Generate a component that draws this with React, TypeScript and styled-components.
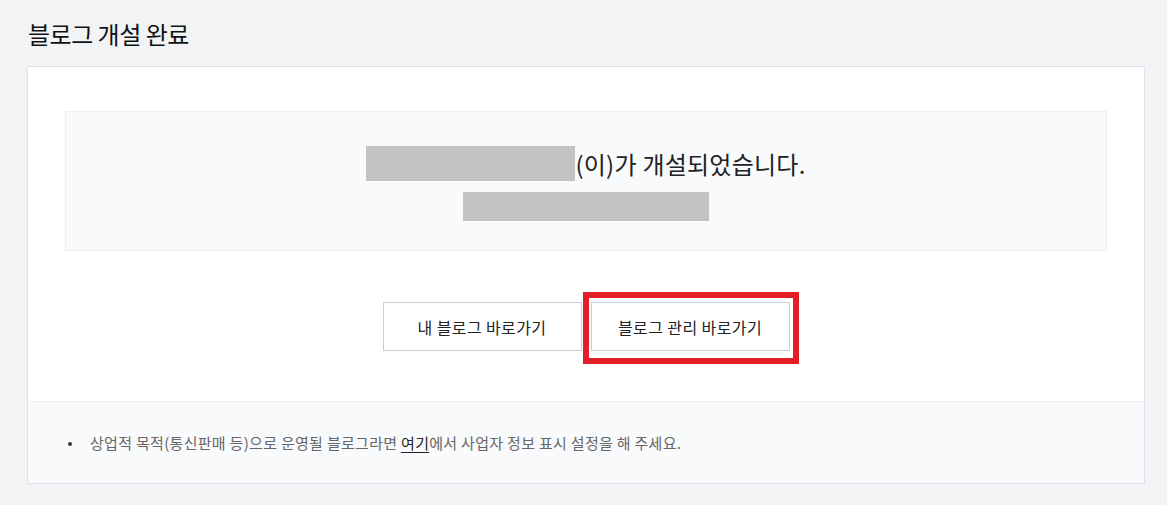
import styled, { createGlobalStyle } from 'styled-components';

const GlobalStyle = createGlobalStyle`
  html, body {
    margin: 0;
    padding: 0;
    background: #f2f3f5;
    font-family: "Noto Sans CJK KR", "Noto Sans", sans-serif;
  }
`;

const Page = styled.div`
  padding: 14px 0 0 27px;
`;

const Title = styled.h2`
  margin: 0 0 12px 1px;
  font-size: 24px;
  font-weight: 400;
  line-height: 40px;
  color: #111;
  letter-spacing: -0.5px;
`;

const Card = styled.div`
  width: 1116px;
  background: #fff;
  border: 1px solid #dde2ea;
`;

const Body = styled.div`
  padding: 44px 37px 50px;
`;

const ResultBox = styled.div`
  display: flex;
  flex-direction: column;
  align-items: center;
  padding: 34px 0 29px;
  background: #f9fafc;
  border: 1px solid #eceef2;
`;

const Message = styled.p`
  display: flex;
  align-items: center;
  margin: 0;
  height: 35px;
  font-size: 24px;
  color: #222;
  letter-spacing: 0.25px;
`;

const Masked = styled.span<{ $w: number; $h: number }>`
  display: inline-block;
  width: ${(p) => p.$w}px;
  height: ${(p) => p.$h}px;
  background: #c3c3c3;
`;

const Url = styled(Masked)`
  margin-top: 11px;
`;

const Buttons = styled.div`
  display: flex;
  justify-content: center;
  gap: 9px;
  margin-top: 51px;
`;

const Button = styled.a<{ $marked?: boolean }>`
  position: relative;
  display: flex;
  align-items: center;
  justify-content: center;
  width: 197px;
  height: 47px;
  border: 1px solid #c8cdd7;
  background: #fff;
  font-size: 16px;
  color: #222;
  text-decoration: none;
  letter-spacing: 0.4px;

  ${(p) =>
    p.$marked &&
    `
    &::after {
      content: '';
      position: absolute;
      left: -9px;
      right: -10px;
      top: -11px;
      bottom: -14px;
      border: 6px solid #e41e26;
    }
  `}
`;

const Notice = styled.ul`
  margin: 0;
  padding: 0 0 0 40px;
  height: 81px;
  display: flex;
  align-items: center;
  list-style: none;
  background: #f9fafc;
  border-top: 1px solid #eceef1;
`;

const NoticeItem = styled.li`
  position: relative;
  padding-left: 22px;
  font-size: 15px;
  color: #666;
  letter-spacing: 0.3px;

  &::before {
    content: '';
    position: absolute;
    left: 0;
    top: 50%;
    width: 4px;
    height: 4px;
    margin-top: -1px;
    border-radius: 50%;
    background: #333;
  }
`;

const Link = styled.a`
  color: #222;
  text-decoration: underline;
  text-underline-offset: 3px;
`;

export default function App() {
  return (
    <>
      <GlobalStyle />
      <Page>
        <Title>블로그 개설 완료</Title>
        <Card>
          <Body>
            <ResultBox>
              <Message>
                <Masked $w={209} $h={35} />
                (이)가 개설되었습니다.
              </Message>
              <Url $w={246} $h={29} />
            </ResultBox>
            <Buttons>
              <Button href="#">내 블로그 바로가기</Button>
              <Button href="#" $marked>
                블로그 관리 바로가기
              </Button>
            </Buttons>
          </Body>
          <Notice>
            <NoticeItem>
              상업적 목적(통신판매 등)으로 운영될 블로그라면 <Link href="#">여기</Link>에서 사업자 정보 표시
              설정을 해 주세요.
            </NoticeItem>
          </Notice>
        </Card>
      </Page>
    </>
  );
}
